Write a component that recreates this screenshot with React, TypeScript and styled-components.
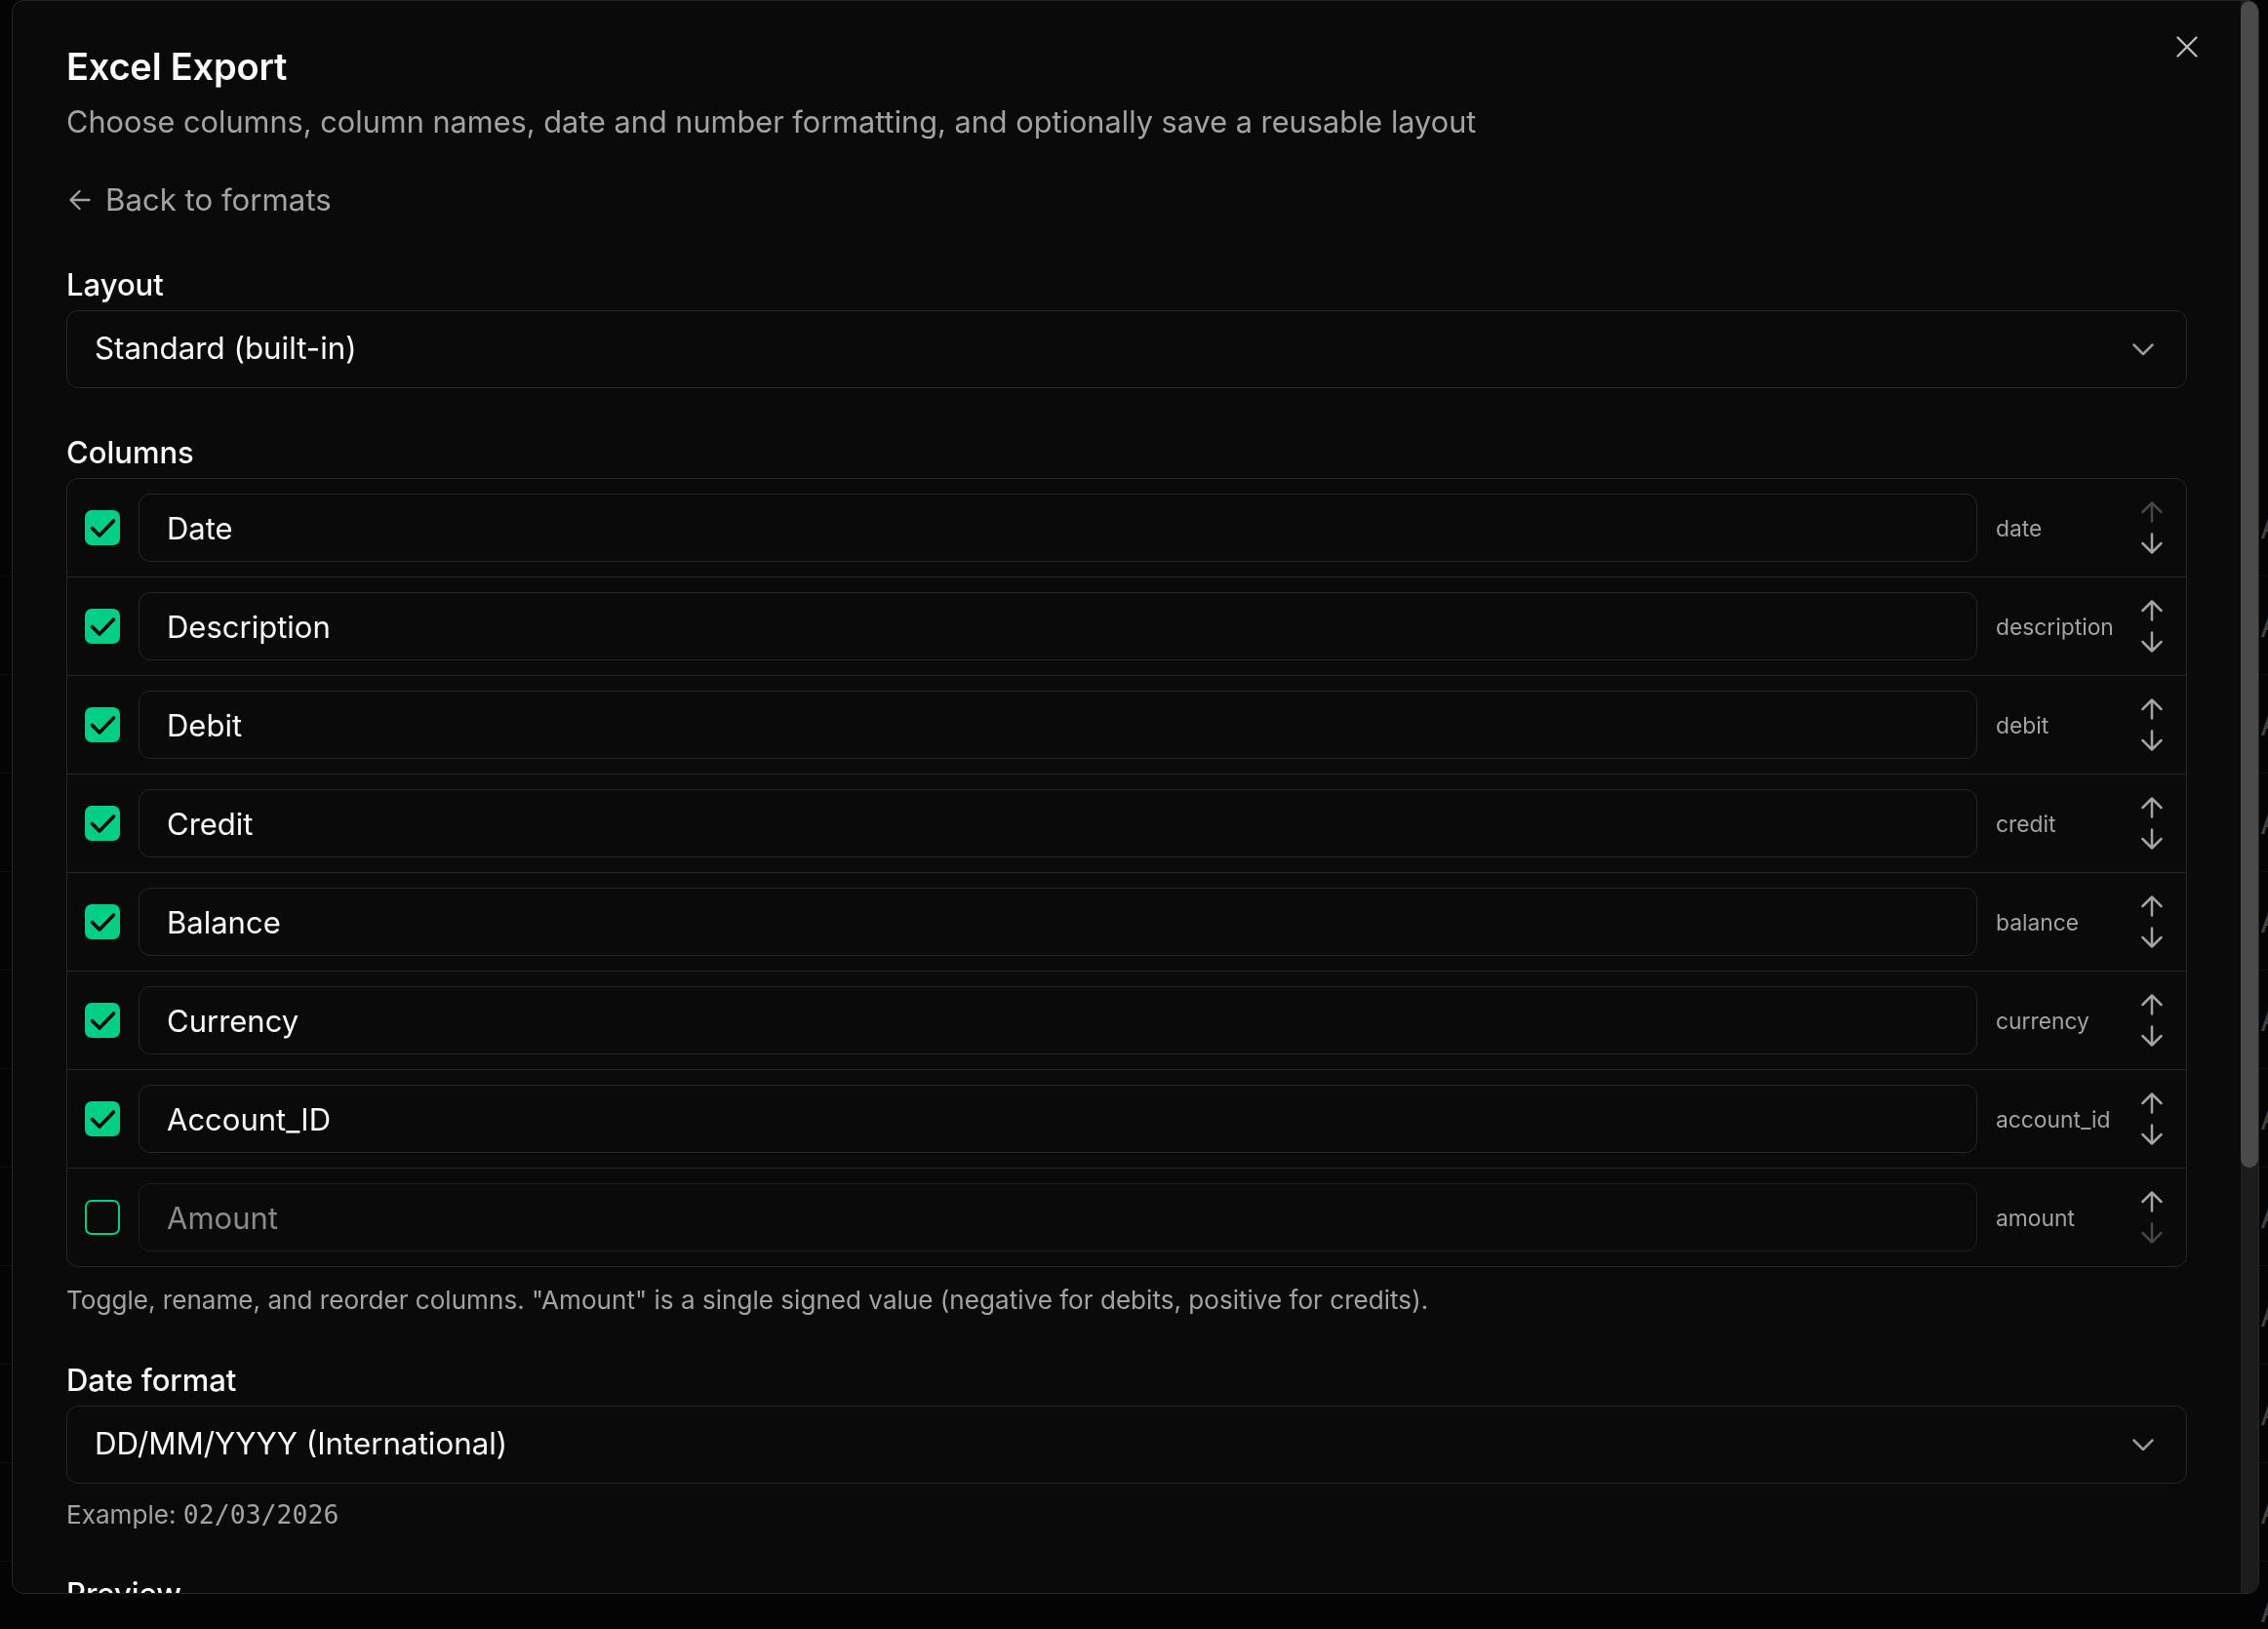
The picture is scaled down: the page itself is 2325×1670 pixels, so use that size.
import React from "react";
import styled, { createGlobalStyle } from "styled-components";

const FONT = `Inter, "Noto Sans", Arial, sans-serif`;

const GlobalStyle = createGlobalStyle`
  * { box-sizing: border-box; }
  html, body { margin: 0; padding: 0; background: #0a0a0a; }
  body {
    font-family: ${FONT};
    color: #fafafa;
    overflow: hidden;
  }
`;

/* ---------- page behind the modal ---------- */
const BgPage = styled.div`
  height: 100vh;
  padding-top: 490px;
  overflow: hidden;
`;
const BgRow = styled.div`
  height: 101px;
  display: flex;
  align-items: center;
  border-bottom: 1px solid #262626;
`;
const BgFill = styled.div`
  flex: 1;
`;
const BgCell = styled.div`
  width: 8px;
  overflow: hidden;
  white-space: nowrap;
  font-size: 32px;
  color: #a3a3a3;
`;
const Overlay = styled.div`
  position: fixed;
  inset: 0;
  background: rgba(0, 0, 0, 0.6);
`;

/* ---------- modal ---------- */
const Dialog = styled.div`
  position: fixed;
  top: 0;
  left: 12px;
  width: 2304px;
  height: 1634px;
  background: #0a0a0a;
  border: 1px solid #262626;
  border-radius: 12px;
  overflow: hidden;
  display: flex;
`;

const ScrollArea = styled.div`
  position: relative;
  flex: 1;
  min-width: 0;
  overflow: hidden;
  padding: 43px 55px 48px 55px;
`;

const ScrollTrack = styled.div`
  flex: none;
  width: 18px;
  background: #1c1c1c;
`;

const ScrollThumb = styled.div`
  height: 1196px;
  border-radius: 9px;
  background: #4a4a4a;
`;

const CloseButton = styled.button`
  position: absolute;
  top: 36px;
  right: 44px;
  width: 22px;
  height: 22px;
  padding: 0;
  border: 0;
  background: transparent;
  color: #bdbdbd;
  cursor: pointer;
  display: block;
  svg { display: block; }
`;

const Title = styled.h2`
  margin: 0;
  font-size: 38px;
  line-height: 48px;
  font-weight: 600;
  letter-spacing: -0.2px;
  color: #fafafa;
`;

const Subtitle = styled.p`
  margin: 13px 0 0;
  font-size: 30.7px;
  line-height: 40px;
  color: #a3a3a3;
`;

const BackLink = styled.button`
  margin-top: 40px;
  padding: 0 0 0 3px;
  border: 0;
  background: transparent;
  display: inline-flex;
  align-items: center;
  align-self: flex-start;
  gap: 15px;
  height: 40px;
  font-family: ${FONT};
  font-size: 31.2px;
  line-height: 40px;
  color: #a3a3a3;
  cursor: pointer;
  svg { display: block; }
`;

const Section = styled.section<{ $gap: number }>`
  margin-top: ${(p) => p.$gap}px;
  display: flex;
  flex-direction: column;
`;

const Label = styled.div`
  font-size: 31px;
  line-height: 40px;
  font-weight: 500;
  color: #fafafa;
  margin-bottom: 6px;
`;

const SelectBox = styled.div`
  height: 80px;
  display: flex;
  align-items: center;
  justify-content: space-between;
  border: 1px solid #262626;
  border-radius: 12px;
  padding: 0 33px 0 28px;
  font-size: 31.3px;
  line-height: 1.2;
  color: #fafafa;
  svg { display: block; }
`;

const ColumnsBox = styled.div`
  border: 1px solid #262626;
  border-radius: 12px;
  overflow: hidden;
`;

const Row = styled.div`
  height: 101px;
  border-top: 1px solid #262626;
  display: flex;
  align-items: center;
  gap: 19px;
  padding: 0 24px 0 18px;
  &:first-child {
    height: 100px;
    border-top: 0;
  }
`;

const CheckBox = styled.span<{ $checked: boolean }>`
  flex: none;
  width: 36px;
  height: 36px;
  border-radius: 7px;
  background: ${(p) => (p.$checked ? "#00cf85" : "transparent")};
  border: ${(p) => (p.$checked ? "0" : "2px solid #00cf85")};
  display: flex;
  align-items: center;
  justify-content: center;
  svg { display: block; }
`;

const NameInput = styled.input<{ $muted: boolean }>`
  flex: 1;
  min-width: 0;
  height: 70px;
  border: 1px solid ${(p) => (p.$muted ? "#1f1f1f" : "#262626")};
  border-radius: 12px;
  background: transparent;
  padding: 0 28px;
  font-family: ${FONT};
  font-size: 31px;
  line-height: 1.2;
  color: ${(p) => (p.$muted ? "#8a8a8a" : "#fafafa")};
  outline: none;
`;

const KeyText = styled.span`
  flex: none;
  width: 130px;
  font-size: 22.8px;
  color: #a3a3a3;
  white-space: nowrap;
`;

const MoveButtons = styled.div`
  flex: none;
  display: flex;
  flex-direction: column;
  gap: 10px;
`;

const ArrowBtn = styled.button<{ $disabled: boolean }>`
  width: 22px;
  height: 22px;
  padding: 0;
  border: 0;
  background: transparent;
  color: ${(p) => (p.$disabled ? "#474747" : "#a3a3a3")};
  cursor: pointer;
  svg { display: block; }
`;

const HelpText = styled.p<{ $top: number }>`
  margin: ${(p) => p.$top}px 0 0;
  font-size: 26.1px;
  line-height: 36px;
  color: #a3a3a3;
`;

const Mono = styled.span`
  font-family: "DejaVu Sans Mono", "Liberation Mono", monospace;
  font-size: 26.5px;
`;

const PreviewBox = styled.div`
  border: 1px solid #262626;
  border-radius: 12px;
  overflow: hidden;
`;

const PreviewRow = styled.div<{ $head?: boolean }>`
  height: 68px;
  display: grid;
  grid-template-columns: 1.2fr 2.4fr 1fr 1fr 1fr 1fr 1.2fr;
  align-items: center;
  padding: 0 28px;
  font-size: 26px;
  color: ${(p) => (p.$head ? "#a3a3a3" : "#fafafa")};
  font-weight: ${(p) => (p.$head ? 500 : 400)};
  background: ${(p) => (p.$head ? "#111111" : "transparent")};
  & + & { border-top: 1px solid #262626; }
`;

const Footer = styled.div`
  margin-top: 46px;
  display: flex;
  justify-content: flex-end;
  gap: 20px;
`;

const FooterButton = styled.button<{ $primary?: boolean }>`
  height: 80px;
  padding: 0 40px;
  border-radius: 12px;
  border: 1px solid ${(p) => (p.$primary ? "#fafafa" : "#262626")};
  background: ${(p) => (p.$primary ? "#fafafa" : "transparent")};
  color: ${(p) => (p.$primary ? "#0a0a0a" : "#fafafa")};
  font-family: ${FONT};
  font-size: 30px;
  font-weight: 500;
`;

/* ---------- icons ---------- */
const XIcon = () => (
  <svg width="22" height="22" viewBox="0 0 22 22" fill="none" stroke="currentColor" strokeWidth="2.3" strokeLinecap="round">
    <path d="M1.5 1.5L20.5 20.5M20.5 1.5L1.5 20.5" />
  </svg>
);

const ArrowLeftIcon = () => (
  <svg width="22" height="22" viewBox="0 0 22 22" fill="none" stroke="currentColor" strokeWidth="2.3" strokeLinecap="round" strokeLinejoin="round">
    <path d="M20.5 11H1.5M10.5 2L1.5 11L10.5 20" />
  </svg>
);

const ChevronDownIcon = () => (
  <svg width="22" height="13" viewBox="0 0 22 13" fill="none" stroke="#9a9a9a" strokeWidth="2.5" strokeLinecap="round" strokeLinejoin="round">
    <path d="M1.5 1.5L11 11L20.5 1.5" />
  </svg>
);

const ArrowUpIcon = () => (
  <svg width="22" height="22" viewBox="0 0 22 22" fill="none" stroke="currentColor" strokeWidth="2.5" strokeLinecap="round" strokeLinejoin="round">
    <path d="M11 20.5V1.5M1.5 11L11 1.5L20.5 11" />
  </svg>
);

const ArrowDownIcon = () => (
  <svg width="22" height="22" viewBox="0 0 22 22" fill="none" stroke="currentColor" strokeWidth="2.5" strokeLinecap="round" strokeLinejoin="round">
    <path d="M11 1.5V20.5M1.5 11L11 20.5L20.5 11" />
  </svg>
);

const CheckIcon = () => (
  <svg width="36" height="36" viewBox="0 0 36 36" fill="none" stroke="#0a0a0a" strokeWidth="3.6" strokeLinecap="round" strokeLinejoin="round">
    <path d="M7.5 18.5L15 26L29.5 11" />
  </svg>
);

/* ---------- data ---------- */
type Col = { label: string; key: string; enabled: boolean };
const columns: Col[] = [
  { label: "Date", key: "date", enabled: true },
  { label: "Description", key: "description", enabled: true },
  { label: "Debit", key: "debit", enabled: true },
  { label: "Credit", key: "credit", enabled: true },
  { label: "Balance", key: "balance", enabled: true },
  { label: "Currency", key: "currency", enabled: true },
  { label: "Account_ID", key: "account_id", enabled: true },
  { label: "Amount", key: "amount", enabled: false },
];

const previewRows = [
  ["02/03/2026", "Card payment – Grocery Store", "45.20", "", "1,254.80", "EUR", "ACC-001"],
  ["03/03/2026", "Salary", "", "2,500.00", "3,754.80", "EUR", "ACC-001"],
  ["04/03/2026", "Electricity bill", "82.15", "", "3,672.65", "EUR", "ACC-001"],
  ["05/03/2026", "Transfer to savings", "500.00", "", "3,172.65", "EUR", "ACC-001"],
];

export default function App() {
  return (
    <>
      <GlobalStyle />
      <BgPage>
        {Array.from({ length: 12 }).map((_, i) => (
          <BgRow key={i}>
            <BgFill />
            <BgCell>Amount</BgCell>
          </BgRow>
        ))}
      </BgPage>
      <Overlay />
      <Dialog role="dialog" aria-label="Excel Export">
        <ScrollArea>
          <CloseButton aria-label="Close">
            <XIcon />
          </CloseButton>

          <Title>Excel Export</Title>
          <Subtitle>
            Choose columns, column names, date and number formatting, and optionally save a reusable layout
          </Subtitle>
          <BackLink>
            <ArrowLeftIcon />
            Back to formats
          </BackLink>

          <Section $gap={47}>
            <Label>Layout</Label>
            <SelectBox>
              <span>Standard (built-in)</span>
              <ChevronDownIcon />
            </SelectBox>
          </Section>

          <Section $gap={46}>
            <Label>Columns</Label>
            <ColumnsBox>
              {columns.map((c, i) => (
                <Row key={c.key}>
                  <CheckBox $checked={c.enabled}>{c.enabled && <CheckIcon />}</CheckBox>
                  <NameInput defaultValue={c.label} $muted={!c.enabled} />
                  <KeyText>{c.key}</KeyText>
                  <MoveButtons>
                    <ArrowBtn $disabled={i === 0} aria-label="Move up">
                      <ArrowUpIcon />
                    </ArrowBtn>
                    <ArrowBtn $disabled={i === columns.length - 1} aria-label="Move down">
                      <ArrowDownIcon />
                    </ArrowBtn>
                  </MoveButtons>
                </Row>
              ))}
            </ColumnsBox>
            <HelpText $top={16}>
              Toggle, rename, and reorder columns. "Amount" is a single signed value (negative for debits, positive for credits).
            </HelpText>
          </Section>

          <Section $gap={44}>
            <Label>Date format</Label>
            <SelectBox>
              <span>DD/MM/YYYY (International)</span>
              <ChevronDownIcon />
            </SelectBox>
            <HelpText $top={14}>
              Example: <Mono>02/03/2026</Mono>
            </HelpText>
          </Section>

          <Section $gap={43}>
            <Label>Preview</Label>
            <PreviewBox>
              <PreviewRow $head>
                <span>Date</span>
                <span>Description</span>
                <span>Debit</span>
                <span>Credit</span>
                <span>Balance</span>
                <span>Currency</span>
                <span>Account_ID</span>
              </PreviewRow>
              {previewRows.map((r, i) => (
                <PreviewRow key={i}>
                  {r.map((v, j) => (
                    <span key={j}>{v}</span>
                  ))}
                </PreviewRow>
              ))}
            </PreviewBox>
          </Section>

          <Footer>
            <FooterButton>Cancel</FooterButton>
            <FooterButton $primary>Export</FooterButton>
          </Footer>
        </ScrollArea>
        <ScrollTrack>
          <ScrollThumb />
        </ScrollTrack>
      </Dialog>
    </>
  );
}
